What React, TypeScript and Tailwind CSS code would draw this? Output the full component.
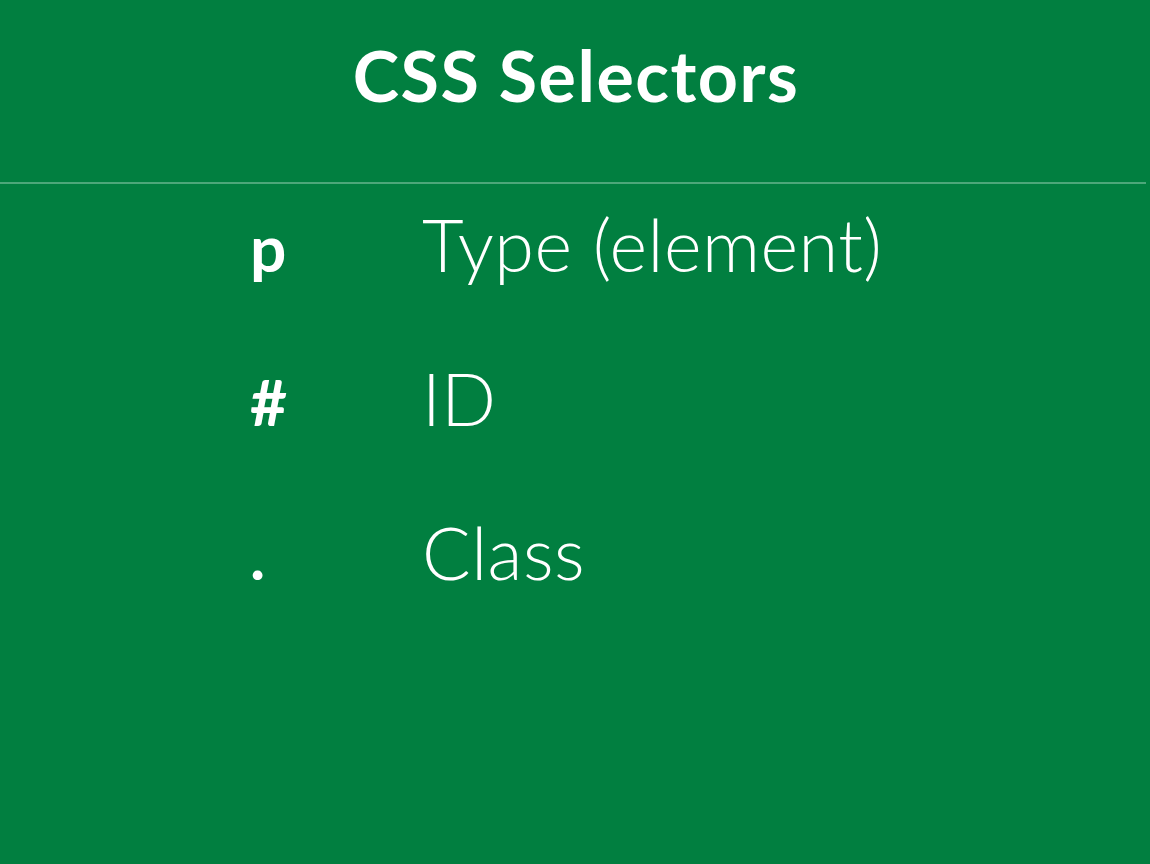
const rows = [
  { sel: "p", label: "Type (element)" },
  { sel: "#", label: "ID" },
  { sel: ".", label: "Class" },
]

export default function App() {
  return (
    <div
      className="w-[1150px] h-[864px] bg-[#017f40] text-white overflow-hidden"
      style={{ fontFamily: "Lato, 'Open Sans', sans-serif" }}
    >
      <div className="h-[182px] flex justify-center pt-[40px]">
        <h1 className="text-[70px] font-bold leading-none tracking-[1.5px] pl-[2px]">CSS Selectors</h1>
      </div>
      <div className="h-[2px] w-[1146px] bg-[#4da77a]" />
      <div className="pl-[250px] pt-[24px] flex flex-col gap-[84px]">
        {rows.map((r) => (
          <div key={r.label} className="flex items-baseline h-[70px]">
            <div className="w-[172px] text-[64px] font-bold leading-none">{r.sel}</div>
            <div className="text-[72px] font-light leading-none tracking-[0.5px]">{r.label}</div>
          </div>
        ))}
      </div>
    </div>
  )
}
